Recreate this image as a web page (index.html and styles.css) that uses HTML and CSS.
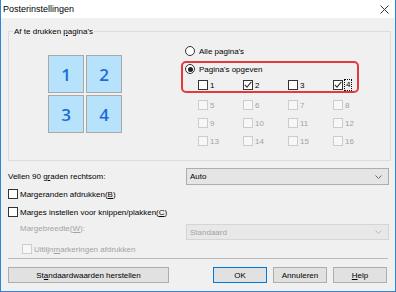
FILE: index.html
```html
<!DOCTYPE html>
<html lang="nl">
<head>
    <meta charset="UTF-8">
    <title>Posterinstellingen</title>
    <link rel="stylesheet" href="styles.css">
</head>
<body>

    <div class="window">
        <div class="titlebar">
            <span class="title">Posterinstellingen</span>
            <svg class="close" width="9" height="9" viewBox="0 0 9 9">
                <path d="M0.5 0.5 L8.5 8.5 M8.5 0.5 L0.5 8.5" stroke="#333" stroke-width="1" fill="none"/>
            </svg>
        </div>

        <div class="content">
            <div class="group">
                <div class="group-title">Af te drukken <u>p</u>agina's</div>
                <div class="group-body">
                    <div class="tiles">
                        <div class="tile">1</div>
                        <div class="tile">2</div>
                        <div class="tile">3</div>
                        <div class="tile">4</div>
                    </div>

                    <div class="pages">
                        <label class="radio-row"><span class="radio"></span><span>Alle pagina's</span></label>

                        <div class="highlight">
                            <label class="radio-row"><span class="radio checked"></span><span>Pagina's opgeven</span></label>
                            <div class="page-grid">
                                <label class="page"><span class="box"></span><span>1</span></label>
                                <label class="page"><span class="box"><svg viewBox="0 0 10 10"><path d="M1.8 4.8 L4 7.2 L8.4 1.8" stroke="#333" stroke-width="1.1" fill="none"/></svg></span><span>2</span></label>
                                <label class="page"><span class="box"></span><span>3</span></label>
                                <label class="page"><span class="box"><svg viewBox="0 0 10 10"><path d="M1.8 4.8 L4 7.2 L8.4 1.8" stroke="#333" stroke-width="1.1" fill="none"/></svg></span><span class="focus">4</span></label>
                            </div>
                        </div>

                        <div class="page-grid disabled">
                            <label class="page"><span class="box"></span><span>5</span></label>
                            <label class="page"><span class="box"></span><span>6</span></label>
                            <label class="page"><span class="box"></span><span>7</span></label>
                            <label class="page"><span class="box"></span><span>8</span></label>
                            <label class="page"><span class="box"></span><span>9</span></label>
                            <label class="page"><span class="box"></span><span>10</span></label>
                            <label class="page"><span class="box"></span><span>11</span></label>
                            <label class="page"><span class="box"></span><span>12</span></label>
                            <label class="page"><span class="box"></span><span>13</span></label>
                            <label class="page"><span class="box"></span><span>14</span></label>
                            <label class="page"><span class="box"></span><span>15</span></label>
                            <label class="page"><span class="box"></span><span>16</span></label>
                        </div>
                    </div>
                </div>
            </div>

            <div class="field-row">
                <span>Vellen 90 g<u>r</u>aden rechtsom:</span>
                <div class="select">
                    <span>Auto</span>
                    <svg width="7" height="4" viewBox="0 0 7 4"><path d="M0.5 0.5 L3.5 3.5 L6.5 0.5" stroke="#666" fill="none"/></svg>
                </div>
            </div>

            <label class="check-row"><span class="box"></span><span>Margeranden afdrukken(<u>B</u>)</span></label>
            <label class="check-row spaced"><span class="box"></span><span>Marges instellen voor knippen/plakken(<u>C</u>)</span></label>

            <div class="field-row small disabled">
                <span class="indent">Margebreedte(<u>W</u>):</span>
                <div class="select">
                    <span>Standaard</span>
                    <svg width="7" height="4" viewBox="0 0 7 4"><path d="M0.5 0.5 L3.5 3.5 L6.5 0.5" stroke="#bbb" fill="none"/></svg>
                </div>
            </div>

            <label class="check-row sub disabled"><span class="box"></span><span>Uitlijn<u>m</u>arkeringen afdrukken</span></label>

            <div class="separator"></div>

            <div class="buttons">
                <button class="btn wide">St<u>a</u>ndaardwaarden herstellen</button>
                <div class="btn-group">
                    <button class="btn default">OK</button>
                    <button class="btn">Annuleren</button>
                    <button class="btn"><u>H</u>elp</button>
                </div>
            </div>
        </div>
    </div>

</body>
</html>
```

FILE: styles.css
```css
* {
    margin: 0;
    padding: 0;
    box-sizing: border-box;
}

body {
    width: 396px;
    height: 292px;
    font-family: "Liberation Sans", Arial, sans-serif;
    font-size: 8px;
    color: #000;
    background: #fff;
}

u {
    text-decoration-thickness: 1px;
}

.window {
    width: 396px;
    height: 292px;
    border: 1px solid #2b86d8;
    border-top: none;
    display: flex;
    flex-direction: column;
}

.titlebar {
    height: 18px;
    background: #fff;
    display: flex;
    align-items: center;
    justify-content: space-between;
    padding: 0 6px 0 2px;
}

.title {
    font-size: 9px;
}

.content {
    flex: 1;
    background: #f0f0f0;
    padding: 0 4px 0 7px;
}

/* group box */
.group {
    margin-top: 13px;
    height: 130px;
    border: 1px solid #dcdcdc;
}

.group-title {
    display: table;
    margin: -6px 0 0 4px;
    padding: 0 1px;
    line-height: 12px;
    background: #f0f0f0;
}

.group-body {
    display: flex;
    align-items: flex-start;
}

.tiles {
    margin: 17px 0 0 39px;
    display: grid;
    grid-template-columns: 36px 36px;
    grid-template-rows: 38px 38px;
    gap: 2px;
}

.tile {
    background: #b6e3fb;
    border: 1px solid #a8a8a8;
    color: #1d6ad6;
    font-family: "Open Sans", "Liberation Sans", sans-serif;
    font-weight: 600;
    font-size: 17px;
    display: flex;
    align-items: center;
    justify-content: center;
}

.pages {
    margin: 7px 0 0 59px;
}

.radio-row {
    display: flex;
    align-items: center;
    gap: 4px;
    height: 12px;
    padding-left: 4px;
}

.radio {
    width: 10px;
    height: 10px;
    border: 1px solid #333;
    border-radius: 50%;
    background: #fff;
    display: flex;
    align-items: center;
    justify-content: center;
}

.radio.checked::after {
    content: "";
    width: 5px;
    height: 5px;
    border-radius: 50%;
    background: #222;
}

.highlight {
    margin-top: 4px;
    width: 178px;
    border: 2px solid #e23a3f;
    border-radius: 5px;
}

.highlight .radio-row {
    padding-left: 2px;
}

.page-grid {
    display: grid;
    grid-template-columns: repeat(4, 45px);
    grid-auto-rows: 12px;
    row-gap: 6px;
    margin-top: 4px;
    padding-left: 15px;
}

.page-grid.disabled {
    margin-top: 6px;
    padding-left: 17px;
}

.page {
    display: flex;
    align-items: center;
    gap: 2px;
}

.box {
    width: 10px;
    height: 10px;
    border: 1px solid #333;
    background: #fff;
    flex-shrink: 0;
}

.box svg {
    display: block;
    width: 10px;
    height: 10px;
    margin: -1px;
}

.focus {
    outline: 1px dotted #000;
    padding: 0 1px;
    line-height: 10px;
}

.disabled {
    color: #a3a3a3;
}

.disabled .box {
    border-color: #cccccc;
    background: #f7f7f7;
}

/* lower fields */
.field-row {
    margin-top: 7px;
    height: 17px;
    display: flex;
    align-items: center;
    justify-content: space-between;
}

.field-row.small {
    margin-top: 6px;
    height: 16px;
    align-items: flex-start;
}

.field-row.small .indent {
    padding-left: 12px;
    line-height: 12px;
    margin-top: -1px;
}

.select {
    width: 203px;
    height: 100%;
    margin-right: 2px;
    background: #e5e5e5;
    border: 1px solid #adadad;
    display: flex;
    align-items: center;
    justify-content: space-between;
    padding: 0 6px 0 3px;
}

.disabled .select {
    background: #e8e8e8;
    border-color: #d5d5d5;
}

.check-row {
    display: flex;
    align-items: center;
    gap: 2px;
    height: 12px;
    margin-top: 3px;
}

.check-row.spaced {
    margin-top: 6px;
}

.check-row.sub {
    padding-left: 14px;
}

.separator {
    margin: 3px 3px 0 0;
    height: 1px;
    background: #b9b9b9;
}

.buttons {
    margin-top: 8px;
    display: flex;
}

.btn {
    height: 16px;
    width: 54px;
    font-family: inherit;
    font-size: 8px;
    color: #000;
    background: #e1e1e1;
    border: 1px solid #adadad;
}

.btn.wide {
    width: 161px;
}

.btn.default {
    border-color: #0078d7;
}

.btn-group {
    margin: 0 4px 0 auto;
    display: flex;
    gap: 6px;
}
```
